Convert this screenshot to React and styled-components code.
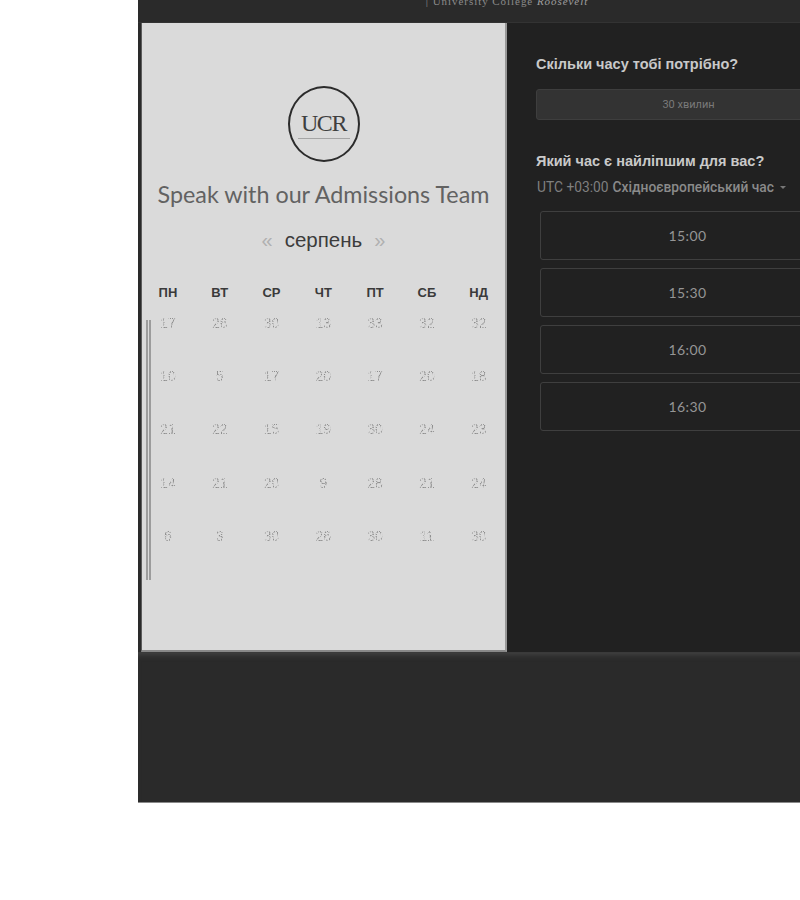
import styled, { createGlobalStyle } from 'styled-components';

const GlobalStyle = createGlobalStyle`
  html, body {
    margin: 0;
    height: 900px;
    overflow: hidden;
    background: #fff;
  }
  * {
    box-sizing: border-box;
  }
`;

const weekDays = ['ПН', 'ВТ', 'СР', 'ЧТ', 'ПТ', 'СБ', 'НД'];

const days = [
  17, 26, 30, 13, 33, 32, 32,
  10, 5, 17, 20, 17, 20, 18,
  21, 22, 15, 19, 30, 24, 23,
  14, 21, 20, 9, 28, 21, 24,
  6, 3, 30, 26, 30, 11, 30,
];

const slots = ['15:00', '15:30', '16:00', '16:30'];

export default function App() {
  return (
    <>
      <GlobalStyle />
      {/* the day numbers are speckled in the picture */}
      <FilterDefs aria-hidden="true">
        <filter id="speckle" x="0" y="0" width="100%" height="100%">
          <feTurbulence type="fractalNoise" baseFrequency="0.8" numOctaves="1" seed="4" />
          <feColorMatrix values="0 0 0 0 0  0 0 0 0 0  0 0 0 0 0  0 0 0 9 -4" />
          <feComposite in="SourceGraphic" operator="in" />
        </filter>
      </FilterDefs>
      <Page>
        <Panel>
          <Brand>
            <BrandText>
              | University College <em>Roosevelt</em>
            </BrandText>
          </Brand>

          <Main>
            <Calendar>
              <Logo>
                <LogoName>UCR</LogoName>
              </Logo>
              <Title>Speak with our Admissions Team</Title>

              <MonthRow>
                <Chevron>«</Chevron>
                <Month>серпень</Month>
                <Chevron>»</Chevron>
              </MonthRow>

              <WeekRow>
                {weekDays.map((day) => (
                  <WeekDay key={day}>{day}</WeekDay>
                ))}
              </WeekRow>

              <DayGrid>
                {days.map((day, i) => (
                  <Day key={i}>{day}</Day>
                ))}
              </DayGrid>
            </Calendar>

            <Booking>
              <Heading>Скільки часу тобі потрібно?</Heading>
              <Duration>30 хвилин</Duration>

              <Heading $top={31}>Який час є найліпшим для вас?</Heading>
              <Timezone>
                UTC +03:00 <b>Східноєвропейський час</b>
                <Caret />
              </Timezone>

              <Slots>
                {slots.map((slot) => (
                  <Slot key={slot}>{slot}</Slot>
                ))}
              </Slots>
            </Booking>
          </Main>

          <Footer />
        </Panel>
      </Page>
    </>
  );
}

const FilterDefs = styled.svg`
  display: block;
  width: 0;
  height: 0;
`;

const Page = styled.div`
  padding-left: 138px;
  margin-top: -18px;
`;

const Panel = styled.div`
  width: 738px;
  background-color: #2a2a2a;
  border-bottom: 1px solid #8a8a8a;
`;

const Brand = styled.header`
  height: 41px;
  display: flex;
  justify-content: center;
  padding-top: 13px;
  border-bottom: 1px solid #333;
`;

const BrandText = styled.span`
  font-family: 'Liberation Serif', serif;
  font-size: 11px;
  line-height: 13px;
  letter-spacing: 0.95px;
  color: #8a8a8a;

  em {
    font-style: italic;
    color: #a0a0a0;
  }
`;

const Main = styled.main`
  display: flex;
  height: 630px;
  padding-left: 3px;
  background-color: #212121;
  border-bottom: 1px solid #3a3a3a;
  box-shadow: inset 3px 0 0 #2a2a2a;
`;

const Calendar = styled.section`
  flex: 0 0 365px;
  display: flex;
  flex-direction: column;
  align-items: center;
  padding-top: 63px;
  background-color: #dadada;
  border-left: 1px solid #5c5c5c;
  border-right: 2px solid #989898;
  border-bottom: 2px solid #888;
`;

const Logo = styled.div`
  width: 72px;
  height: 76px;
  display: flex;
  align-items: center;
  justify-content: center;
  border: 2px solid #2b2b2b;
  border-radius: 50%;
`;

const LogoName = styled.span`
  width: 52px;
  padding-bottom: 1px;
  text-align: center;
  font-family: 'Liberation Serif', serif;
  font-size: 24px;
  letter-spacing: -1.4px;
  color: #3f3f3f;
  border-bottom: 1px solid #a5a5a5;
`;

const Title = styled.h1`
  margin: 17px 0 0;
  font-family: Lato, sans-serif;
  font-size: 23.3px;
  line-height: 30px;
  font-weight: 400;
  white-space: nowrap;
  color: #626262;
`;

const MonthRow = styled.div`
  display: flex;
  align-items: center;
  gap: 12px;
  margin-top: 16px;
  height: 30px;
`;

const Month = styled.span`
  font-family: 'Liberation Sans', sans-serif;
  font-size: 20.5px;
  color: #3c3c3c;
`;

const Chevron = styled.span`
  font-family: 'Liberation Sans', sans-serif;
  font-size: 20px;
  color: #b0b0b0;
`;

const WeekRow = styled.div`
  display: grid;
  grid-template-columns: repeat(7, 51.8px);
  margin-top: 28px;
  width: 363px;
`;

const WeekDay = styled.span`
  text-align: center;
  font-family: 'Liberation Sans', sans-serif;
  font-size: 13px;
  line-height: 20px;
  font-weight: 700;
  color: #3a3a3a;
`;

const DayGrid = styled.div`
  align-self: flex-start;
  display: grid;
  grid-template-columns: repeat(7, 51.8px);
  grid-auto-rows: 53.2px;
  flex: 0 0 260px;
  min-height: 0;
  height: 260px;
  width: 368px;
  margin: 17px -12px 0 4px;
  border-left: 5px double #9c9c9c;
`;

const Day = styled.span`
  margin: 0 9px 0 -9px;
  text-align: center;
  font-family: 'Liberation Sans', sans-serif;
  font-size: 14px;
  line-height: 7px;
  color: #8e8e8e;
  filter: url(#speckle);
`;

const Booking = styled.section`
  flex: 1;
  padding: 31px 35px 0 29px;
`;

const Heading = styled.h2`
  margin: ${({ $top }) => $top || 0}px 0 0;
  font-family: 'Liberation Sans', sans-serif;
  font-size: 14.5px;
  line-height: 20px;
  font-weight: 700;
  white-space: nowrap;
  color: #c9c9c9;
`;

const Duration = styled.div`
  height: 31px;
  margin-top: 15px;
  display: flex;
  align-items: center;
  justify-content: center;
  font-family: Roboto, 'Liberation Sans', sans-serif;
  font-size: 11px;
  color: #7a7a7a;
  background-color: #333;
  border: 1px solid #3e3e3e;
  border-radius: 3px;
`;

const Timezone = styled.div`
  display: flex;
  align-items: center;
  gap: 4px;
  margin-top: 6px;
  padding-left: 1px;
  height: 20px;
  font-family: Roboto, 'Liberation Sans', sans-serif;
  font-size: 13.8px;
  white-space: nowrap;
  color: #7f7f7f;

  b {
    font-weight: 500;
    color: #8a8a8a;
  }
`;

const Caret = styled.i`
  width: 0;
  height: 0;
  margin-left: 2px;
  border-left: 3.5px solid transparent;
  border-right: 3.5px solid transparent;
  border-top: 3.5px solid #777;
`;

const Slots = styled.div`
  display: flex;
  flex-direction: column;
  gap: 8px;
  margin: 14px 0 0 4px;
  width: 295px;
`;

const Slot = styled.div`
  height: 49px;
  display: flex;
  align-items: center;
  justify-content: center;
  font-family: Lato, sans-serif;
  font-size: 14px;
  letter-spacing: 0.4px;
  color: #959595;
  border: 1px solid #3f3f3f;
  border-radius: 3px;
`;

const Footer = styled.footer`
  height: 149px;
  background-color: #2a2a2a;
  box-shadow: inset 0 5px 6px -4px #4a4a4a;
`;
